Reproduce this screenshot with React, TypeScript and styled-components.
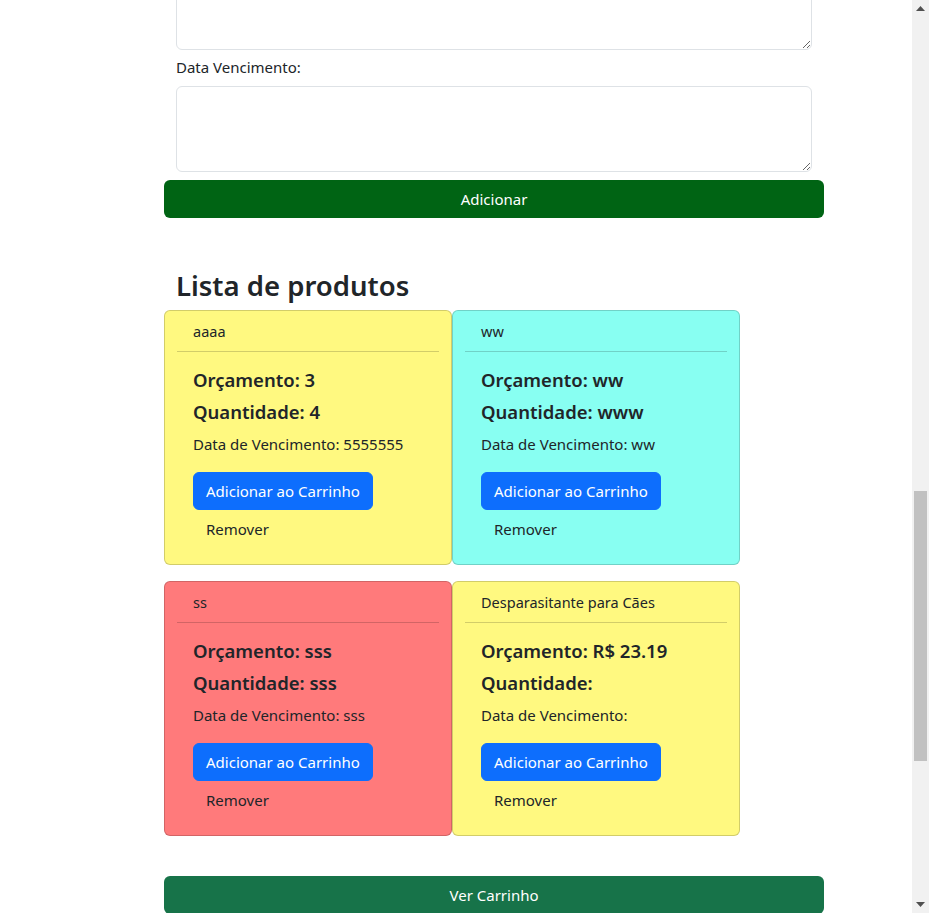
import React from "react";
import styled, { createGlobalStyle } from "styled-components";

const Global = createGlobalStyle`
  html, body { margin: 0; padding: 0; overflow: hidden; background: #fff; }
  body { font-family: "Noto Sans", "Open Sans", sans-serif; color: #212529; }
  * { box-sizing: border-box; }
`;

const Viewport = styled.div`
  display: flex;
  width: 929px;
  height: 913px;
  overflow: hidden;
`;

const Page = styled.div`
  flex: 1;
  overflow: hidden;
`;

const Container = styled.div`
  width: 660px;
  margin-left: 164px;
  display: flex;
  flex-direction: column;
`;

const Form = styled.div`
  display: flex;
  flex-direction: column;
  padding: 0 12px;
  margin-top: -36px;
`;

const TextArea = styled.textarea`
  width: 100%;
  height: 86px;
  border: 1px solid #dee2e6;
  border-radius: 6px;
  background: #fff;
  font-family: inherit;
  font-size: 16px;
  resize: vertical;
  display: block;
`;

const Label = styled.label`
  font-size: 15px;
  line-height: 24px;
  padding-top: 5px;
  margin-bottom: 7px;
  color: #212529;
`;

const WideButton = styled.button<{ $bg: string }>`
  display: block;
  width: 100%;
  height: 38px;
  border: none;
  border-radius: 6px;
  background: ${(p) => p.$bg};
  color: #fff;
  font-family: inherit;
  font-size: 15px;
  cursor: pointer;
`;

const AddButton = styled(WideButton)`
  margin-top: 8px;
`;

const Heading = styled.h2`
  margin: 50px 0 6px;
  padding: 0 12px;
  font-size: 27.5px;
  line-height: 36px;
  font-weight: 600;
  color: #212529;
`;

const CardGrid = styled.div`
  display: grid;
  grid-template-columns: 288px 288px;
  row-gap: 16px;
`;

const Card = styled.div<{ $bg: string }>`
  background: ${(p) => p.$bg};
  border: 1px solid rgba(0, 0, 0, 0.175);
  border-radius: 6px;
  padding: 0 12px;
  display: flex;
  flex-direction: column;
`;

const CardHeader = styled.div`
  padding: 8px 16px;
  line-height: 24px;
  font-size: 14.5px;
  border-bottom: 1px solid rgba(0, 0, 0, 0.175);
`;

const CardBody = styled.div`
  padding: 16px;
  display: flex;
  flex-direction: column;
  align-items: flex-start;
`;

const Title = styled.h5`
  margin: 0 0 8px;
  font-size: 18.5px;
  line-height: 24px;
  font-weight: 600;
`;

const Text = styled.p`
  margin: 0 0 16px;
  font-size: 15px;
  line-height: 24px;
`;

const CartButton = styled.button`
  height: 38px;
  padding: 0 12px;
  border: 1px solid #0d6efd;
  border-radius: 6px;
  background: #0d6efd;
  color: #fff;
  font-family: inherit;
  font-size: 15px;
  cursor: pointer;
`;

const RemoveButton = styled.button`
  height: 38px;
  padding: 0 12px;
  border: 1px solid transparent;
  background: transparent;
  color: #212529;
  font-family: inherit;
  font-size: 15px;
  cursor: pointer;
`;

const CartLink = styled(WideButton)`
  margin-top: 40px;
`;

const Scrollbar = styled.div`
  width: 17px;
  height: 913px;
  background: #f1f1f1;
  display: flex;
  flex-direction: column;
  align-items: center;
`;

const Arrow = styled.div`
  width: 17px;
  height: 17px;
  display: flex;
  align-items: center;
  justify-content: center;
`;

const Track = styled.div`
  flex: 1;
  width: 100%;
  display: flex;
  flex-direction: column;
  align-items: center;
`;

const Thumb = styled.div<{ $top: number; $height: number }>`
  margin-top: ${(p) => p.$top}px;
  width: 13px;
  height: ${(p) => p.$height}px;
  background: #c1c1c1;
`;

type Product = {
  name: string;
  orcamento: string;
  quantidade: string;
  vencimento: string;
  color: string;
};

const products: Product[] = [
  { name: "aaaa", orcamento: "3", quantidade: "4", vencimento: "5555555", color: "#fff980" },
  { name: "ww", orcamento: "ww", quantidade: "www", vencimento: "ww", color: "#88fff2" },
  { name: "ss", orcamento: "sss", quantidade: "sss", vencimento: "sss", color: "#ff7a7b" },
  { name: "Desparasitante para Cães", orcamento: "R$ 23.19", quantidade: "", vencimento: "", color: "#fff980" },
];

export default function App() {
  return (
    <>
      <Global />
      <Viewport>
        <Page>
          <Container>
            <Form>
              <TextArea />
              <Label>Data Vencimento:</Label>
              <TextArea />
            </Form>
            <AddButton $bg="#006414">Adicionar</AddButton>
            <Heading>Lista de produtos</Heading>
            <CardGrid>
              {products.map((p) => (
                <Card key={p.name} $bg={p.color}>
                  <CardHeader>{p.name}</CardHeader>
                  <CardBody>
                    <Title>Orçamento: {p.orcamento}</Title>
                    <Title>Quantidade: {p.quantidade}</Title>
                    <Text>Data de Vencimento: {p.vencimento}</Text>
                    <CartButton>Adicionar ao Carrinho</CartButton>
                    <RemoveButton>Remover</RemoveButton>
                  </CardBody>
                </Card>
              ))}
            </CardGrid>
            <CartLink $bg="#177349">Ver Carrinho</CartLink>
          </Container>
        </Page>
        <Scrollbar>
          <Arrow>
            <svg width="9" height="5" viewBox="0 0 9 5"><path d="M4.5 0 L9 5 L0 5 Z" fill="#505050" /></svg>
          </Arrow>
          <Track>
            <Thumb $top={474} $height={270} />
          </Track>
          <Arrow>
            <svg width="9" height="5" viewBox="0 0 9 5"><path d="M0 0 L9 0 L4.5 5 Z" fill="#505050" /></svg>
          </Arrow>
        </Scrollbar>
      </Viewport>
    </>
  );
}
